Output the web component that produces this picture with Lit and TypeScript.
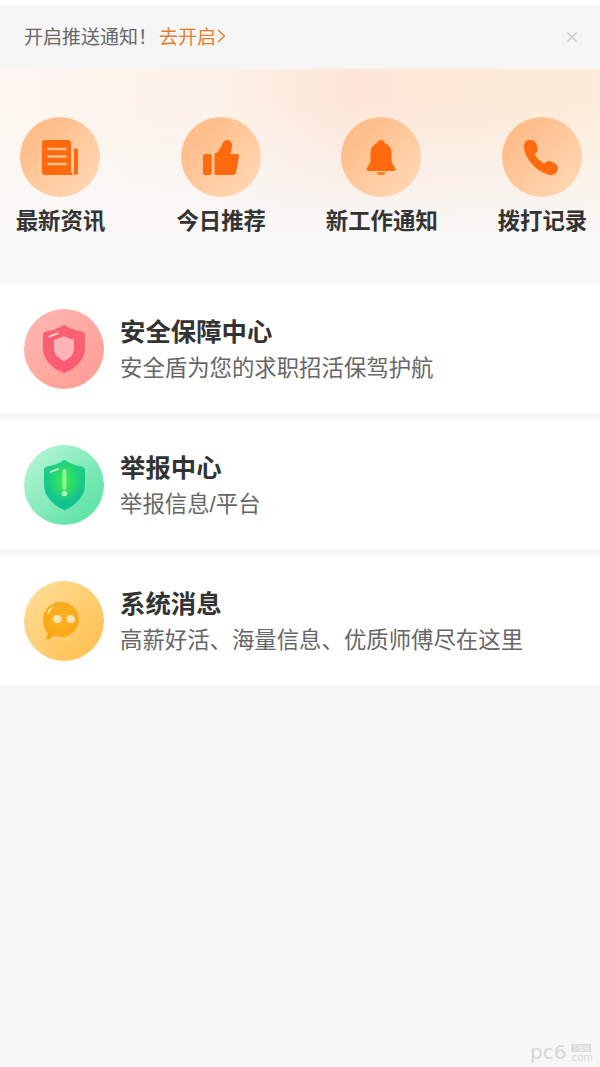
import { LitElement, html, css, svg } from 'lit';
import { customElement } from 'lit/decorators.js';

const navItems = [
  {
    label: '最新资讯',
    icon: svg`<path d="M3 0h23a3 3 0 0 1 3 3v27c0 2.500 1.300 5 4 5H3a3 3 0 0 1-3-3V3a3 3 0 0 1 3-3z" fill="#ff6a0e"/>
      <path d="M32 8.500h2a2 2 0 0 1 2 2V32a3 3 0 0 1-3 3c-.8-.6-1-1.500-1-2.500z" fill="#ff6a0e"/>
      <path d="M6.500 9h17M6.500 16.500h17M6.500 24h17" stroke="#ffc08e" stroke-width="2.400" stroke-linecap="round" fill="none"/>`,
  },
  {
    label: '今日推荐',
    icon: svg`<rect x="0" y="14" width="8.600" height="21" rx="2" fill="#ff6a0e"/>
      <path d="M11.500 14C15 12 18 8 19.500 3.500 20.500 1 22 0 24 0c3.500 0 5.500 3 5 7l-1.500 7H34c1.500 0 2.200 1 2 2.500l-3 16c-.3 1.500-1.500 2.500-3 2.500H11.500z" fill="#ff6a0e"/>`,
  },
  {
    label: '新工作通知',
    icon: svg`<path d="M18 0c2 0 3.600 1.400 4 3.300C26.500 5 28.500 8.500 28.500 13v7c0 3 2 5.500 3.500 7.500 1 1.500.5 3.500-1.500 3.500h-25c-2 0-2.500-2-1.500-3.500 1.500-2 3.500-4.500 3.500-7.500v-7c0-4.500 2-8 6.500-9.700C14.400 1.400 16 0 18 0z" fill="#ff6a0e"/>
      <path d="M13.500 32.200h9c-.5 1.700-2.300 2.800-4.500 2.800s-4-1.100-4.500-2.800z" fill="#ff6a0e"/>`,
  },
  {
    label: '拨打记录',
    icon: svg`<path d="M1.500 1.800C3-.2 6.500-.5 9 .6c2 .9 3.200 2.700 3.700 4.700l.8 3.300c.4 1.600-.2 3.100-1.400 4.100l-1.500 1.300c1.800 3.800 5.200 7.500 9.700 9.600l1.900-1.600c1.200-1 2.800-1.200 4.200-.6l4 1.700c2.300 1 3.700 2.900 3.600 5.200-.1 3.600-2.800 6.700-6.500 6.700-5 0-12.500-3.800-18-9.300C4 20.200.3 13 .1 7c-.1-2 .4-3.800 1.400-5.200z" fill="#ff6a0e"/>`,
  },
];

const rows = [
  {
    title: '安全保障中心',
    sub: '安全盾为您的求职招活保驾护航',
    bg: 'red',
    w: 42,
    h: 48,
    icon: svg`<defs><linearGradient id="sr" x1="0" y1="0" x2="0" y2="1"><stop offset="0" stop-color="#f8636f"/><stop offset="1" stop-color="#fb5c74"/></linearGradient></defs>
      <path d="M19.500.6c1-.8 2-.8 3 0C26 3.300 32 5.500 39 6.500c1.800.3 3 1.500 3 3.300V24c0 10.500-9.500 19.500-19.500 23.600-1 .4-2 .4-3 0C9.500 43.500 0 34.500 0 24V9.800C0 8 1.200 6.800 3 6.500 10 5.500 16 3.300 19.500.6z" fill="url(#sr)"/>
      <path d="M21 11c2.500 1.800 6 3 10 3.500V24c0 5.500-4.500 9.500-10 12-5.500-2.500-10-6.500-10-12v-9.500c4-.5 7.500-1.700 10-3.500z" fill="#fdb4b9"/>
      <path d="M6.500 11.500l8-3" stroke="#ffe3e3" stroke-width="1.800" stroke-linecap="round"/>`,
  },
  {
    title: '举报中心',
    sub: '举报信息/平台',
    bg: 'green',
    w: 41,
    h: 50,
    icon: svg`<defs><linearGradient id="sg" x1="0" y1="0" x2="0" y2="1"><stop offset="0" stop-color="#1fd085"/><stop offset="1" stop-color="#12bf91"/></linearGradient>
        <radialGradient id="sg2" cx=".5" cy=".42" r=".42"><stop offset="0" stop-color="#3cee48"/><stop offset="1" stop-color="#3cee48" stop-opacity="0"/></radialGradient></defs>
      <path d="M19 .6c1-.8 2-.8 3 0C25 3.300 31 5.500 38 6.500c1.800.3 3 1.500 3 3.300V25c0 10.500-9 20-19 24.600-1 .4-2 .4-3 0C9 45 0 35.500 0 25V9.800C0 8 1.200 6.800 3 6.500 10 5.500 16 3.300 19 .6z" fill="url(#sg)"/>
      <path d="M19 .6c1-.8 2-.8 3 0C25 3.300 31 5.500 38 6.500c1.800.3 3 1.500 3 3.300V25c0 10.500-9 20-19 24.600-1 .4-2 .4-3 0C9 45 0 35.500 0 25V9.800C0 8 1.200 6.800 3 6.500 10 5.500 16 3.300 19 .6z" fill="url(#sg2)"/>
      <path d="M20.500 11v17" stroke="#93f29c" stroke-width="4" stroke-linecap="round"/>
      <circle cx="20.500" cy="33.500" r="2.800" fill="#a6f5ae"/>
      <path d="M6.500 12l7.500-2.800" stroke="#c8f7d8" stroke-width="1.800" stroke-linecap="round"/>`,
  },
  {
    title: '系统消息',
    sub: '高薪好活、海量信息、优质师傅尽在这里',
    bg: 'yellow',
    w: 42,
    h: 38,
    icon: svg`<defs><radialGradient id="sy" cx=".5" cy=".45" r=".6"><stop offset="0" stop-color="#fcb424"/><stop offset="1" stop-color="#fba514"/></radialGradient></defs>
      <path d="M18 0c10 0 18 7.800 18 17.500S28 35 18 35c-2.500 0-4.800-.5-7-1.400C8.300 36.500 5 38 2 37.500c1.600-1.500 2.500-4 2.500-6.500C1.700 27.500 0 22.700 0 17.500 0 7.800 8 0 18 0z" fill="url(#sy)"/>
      <circle cx="14.300" cy="17" r="4.100" fill="#fde3b8"/>
      <circle cx="27.800" cy="17" r="4.100" fill="#fde3b8"/>
      <path d="M5 11c1-2.500 2.500-4.500 4.500-5.500" stroke="#ffe2a6" stroke-width="1.800" stroke-linecap="round" fill="none"/>`,
  },
];

@customElement('app-root')
export class AppRoot extends LitElement {
  static styles = css`
    :host {
      display: block;
      position: relative;
      height: 1067px;
      overflow: hidden;
      background: #f7f7f7;
      font-family: 'Liberation Sans', 'Noto Sans CJK SC', sans-serif;
    }

    .top-strip {
      height: 5px;
      background: #fff;
    }

    .notice {
      height: 64px;
      display: flex;
      align-items: center;
      padding: 0 22px 0 24px;
      background: #f6f6f6;
      font-size: 19px;
      color: #666;
    }

    .notice-text {
      margin-bottom: 3px;
    }

    .notice-link {
      margin: 0 1px 3px 2px;
      color: #e07f34;
    }

    .notice-chevron {
      display: block;
      margin-bottom: 2px;
    }

    .notice-close {
      margin-left: auto;
      display: block;
    }

    .hero {
      height: 216px;
      box-sizing: border-box;
      padding: 48px 18px 0 20px;
      background:
        linear-gradient(180deg, rgba(247, 247, 247, 0) 15%, #f8f8f8 80%),
        linear-gradient(90deg, #fdf7ef 0%, #fdf2e9 35%, #fde6d8 58%, #fdecd9 100%);
    }

    .nav {
      display: flex;
      justify-content: space-between;
    }

    .nav-item {
      width: 80px;
      display: flex;
      flex-direction: column;
      align-items: center;
    }

    .nav-circle {
      width: 80px;
      height: 80px;
      border-radius: 50%;
      display: flex;
      align-items: center;
      justify-content: center;
      background: linear-gradient(135deg, #ffb67d 0%, #ffdbbb 100%);
    }

    .nav-label {
      margin-top: 12px;
      padding-left: 1px;
      white-space: nowrap;
      font-size: 22.400px;
      line-height: 26px;
      font-weight: 700;
      color: #333;
    }

    .rows {
      display: flex;
      flex-direction: column;
      gap: 8px;
    }

    .row {
      height: 128px;
      display: flex;
      align-items: center;
      gap: 16px;
      padding-left: 24px;
      background: #fff;
    }

    .row-circle {
      width: 80px;
      height: 80px;
      border-radius: 50%;
      flex: none;
      display: flex;
      align-items: center;
      justify-content: center;
    }

    .row-circle.red {
      background: linear-gradient(135deg, #ffb9b3 0%, #ff9b91 100%);
    }

    .row-circle.green {
      background: linear-gradient(135deg, #bdf7da 0%, #4fdf9c 100%);
    }

    .row-circle.yellow {
      background: linear-gradient(135deg, #ffdf9c 0%, #ffbd4a 100%);
    }

    .row-text {
      padding-top: 1px;
    }

    .row-title {
      font-size: 25.400px;
      line-height: 30px;
      font-weight: 700;
      color: #333;
    }

    .row-sub {
      margin-top: 8px;
      font-size: 22.400px;
      line-height: 28px;
      color: #666;
    }

    .watermark {
      position: absolute;
      right: 7px;
      bottom: 4px;
      display: flex;
      align-items: flex-end;
      gap: 2px;
      color: #d6d6d6;
      font-family: 'DejaVu Sans', 'Noto Sans CJK SC', sans-serif;
    }

    .watermark-logo {
      font-size: 20px;
      line-height: 22px;
    }

    .watermark-side {
      display: flex;
      flex-direction: column;
      align-items: center;
    }

    .watermark-tag {
      padding: 0 1px;
      background: #dcdcdc;
      color: #f7f7f7;
      font-size: 6px;
      line-height: 8px;
    }

    .watermark-com {
      font-size: 10px;
      line-height: 11px;
    }
  `;

  render() {
    return html`
      <div class="top-strip"></div>
      <div class="notice">
        <span class="notice-text">开启推送通知！</span>
        <span class="notice-link">去开启</span>
        <svg class="notice-chevron" width="9" height="14" viewBox="0 0 9 14">
          <path d="M1 1l6.500 6L1 13" stroke="#e07f34" stroke-width="1.400" fill="none"/>
        </svg>
        <svg class="notice-close" width="12" height="12" viewBox="0 0 12 12">
          <path d="M1.500 1.500l9 9M10.500 1.500l-9 9" stroke="#c4c4c4" stroke-width="1.200" fill="none"/>
        </svg>
      </div>
      <div class="hero">
        <div class="nav">
          ${navItems.map(
            (item) => html`
              <div class="nav-item">
                <div class="nav-circle">
                  <svg width="36" height="35" viewBox="0 0 36 35">${item.icon}</svg>
                </div>
                <div class="nav-label">${item.label}</div>
              </div>
            `,
          )}
        </div>
      </div>
      <div class="rows">
        ${rows.map(
          (row) => html`
            <div class="row">
              <div class="row-circle ${row.bg}">
                <svg width=${row.w} height=${row.h} viewBox="0 0 ${row.w} ${row.h}">${row.icon}</svg>
              </div>
              <div class="row-text">
                <div class="row-title">${row.title}</div>
                <div class="row-sub">${row.sub}</div>
              </div>
            </div>
          `,
        )}
      </div>
      <div class="watermark">
        <span class="watermark-logo">pc6</span>
        <span class="watermark-side">
          <span class="watermark-tag">下载站</span>
          <span class="watermark-com">.com</span>
        </span>
      </div>
    `;
  }
}
